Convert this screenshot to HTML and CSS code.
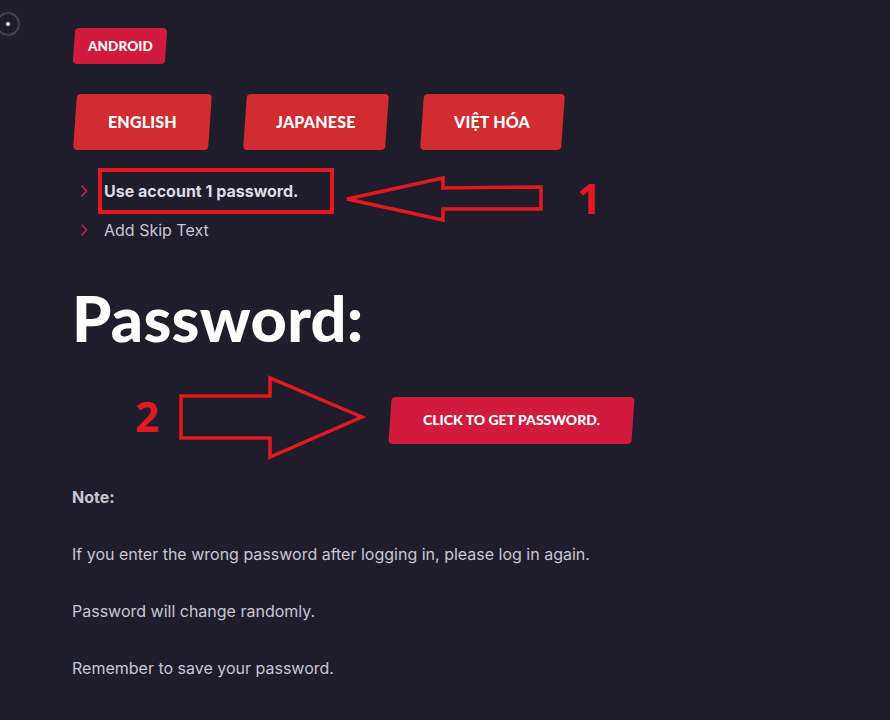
FILE: index.html
```html
<!DOCTYPE html>
<html lang="en">
<head>
<meta charset="utf-8">
<title>Password</title>
<link rel="stylesheet" href="styles.css">
</head>
<body>
<div class="dot-widget"><span class="dot"></span></div>
<main class="page">
  <a class="badge btn-crimson"><span>ANDROID</span></a>
  <div class="langs">
    <a class="lang btn-red w1"><span>ENGLISH</span></a>
    <a class="lang btn-red w2"><span>JAPANESE</span></a>
    <a class="lang btn-red w3"><span>VIỆT HÓA</span></a>
  </div>
  <ul class="list">
    <li class="item strong"><svg class="chev" viewBox="0 0 8 14" width="8" height="14"><path d="M1.5 1.5 L6.5 7 L1.5 12.5" fill="none" stroke="#c61f43" stroke-width="1.6"/></svg><span>Use account 1 password.</span></li>
    <li class="item"><svg class="chev" viewBox="0 0 8 14" width="8" height="14"><path d="M1.5 1.5 L6.5 7 L1.5 12.5" fill="none" stroke="#c61f43" stroke-width="1.6"/></svg><span>Add Skip Text</span></li>
  </ul>
  <h1 class="title">Password:</h1>
  <a class="getpw btn-crimson"><span>CLICK TO GET PASSWORD.</span></a>
  <div class="notes">
    <p class="note-head">Note:</p>
    <p>If you enter the wrong password after logging in, please log in again.</p>
    <p>Password will change randomly.</p>
    <p>Remember to save your password.</p>
  </div>
</main>
<svg class="annot" width="890" height="720" viewBox="0 0 890 720">
  <rect x="100" y="170" width="232" height="42" fill="none" stroke="#e3191f" stroke-width="4"/>
  <polygon points="347,199 443,178 443,188 541,187 541,209 443,209 443,220" fill="none" stroke="#e3191f" stroke-width="3.5" stroke-linejoin="miter"/>
  <text x="577" y="214" class="num">1</text>
  <polygon points="181,396 270,396 270,378 362,417 270,457 270,438 181,438" fill="none" stroke="#e3191f" stroke-width="3.5"/>
  <text x="135" y="432" class="num">2</text>
</svg>
</body>
</html>
```

FILE: styles.css
```css
html, body {
  margin: 0;
  padding: 0;
  background: #1f1d2b;
}
body {
  width: 890px;
  height: 720px;
  overflow: hidden;
  position: relative;
  font-family: "Inter", "Liberation Sans", sans-serif;
  color: #c8c6d2;
}
.dot-widget {
  position: absolute;
  left: -4px;
  top: 12px;
  width: 20px;
  height: 20px;
  border: 2px solid #41404c;
  border-radius: 50%;
  display: flex;
  align-items: center;
  justify-content: center;
}
.dot {
  width: 4px;
  height: 4px;
  border-radius: 50%;
  background: #fff;
}
.page {
  padding: 28px 0 0 72px;
}
.btn-red, .btn-crimson {
  display: flex;
  align-items: center;
  justify-content: center;
  color: #fff;
  font-family: "Lato", "Liberation Sans", sans-serif;
  font-weight: 900;
  text-transform: uppercase;
  border-radius: 4px;
  transform: skewX(-4deg);
  text-decoration: none;
}
.btn-red span, .btn-crimson span {
  transform: skewX(4deg) translateY(-1px);
}
.badge span {
  transform: skewX(4deg);
}
.btn-red { background: #d22b30; }
.btn-crimson { background: #d21a3f; }
.badge {
  width: 92px;
  height: 36px;
  margin-left: 2px;
  font-size: 13.5px;
  letter-spacing: 0.1px;
}
.langs {
  display: flex;
  gap: 35px;
  margin-top: 30px;
  margin-left: 2.5px;
  height: 56px;
}
.lang {
  height: 56px;
  font-size: 16px;
  letter-spacing: 0.2px;
}
.w1 { width: 135px; }
.w2 { width: 142px; }
.w3 { width: 141px; }
.list {
  list-style: none;
  margin: 21px 0 0 0;
  padding: 0;
}
.item {
  display: flex;
  align-items: center;
  height: 39px;
  font-size: 16px;
  color: #c8c6d2;
}
.item.strong {
  font-weight: 700;
  color: #dcdbe4;
}
.chev {
  margin: 0 16px 0 8px;
  flex: none;
}
.title {
  margin: 37px 0 0 0;
  font-family: "Lato", "Liberation Sans", sans-serif;
  font-weight: 900;
  font-size: 63px;
  line-height: 64px;
  color: #ffffff;
  letter-spacing: 0.3px;
}
.getpw {
  width: 243px;
  height: 47px;
  margin: 47px 0 0 318px;
  font-size: 14px;
}
.notes {
  margin-top: 41px;
}
.notes p {
  margin: 0 0 33px 0;
  font-size: 16px;
  line-height: 24px;
  color: #c8c6d2;
}
.notes .note-head {
  font-weight: 700;
}
.annot {
  position: absolute;
  left: 0;
  top: 0;
  pointer-events: none;
}
.num {
  font-family: "Open Sans", "Liberation Sans", sans-serif;
  font-weight: 700;
  font-size: 42px;
  fill: #e3191f;
}
```
